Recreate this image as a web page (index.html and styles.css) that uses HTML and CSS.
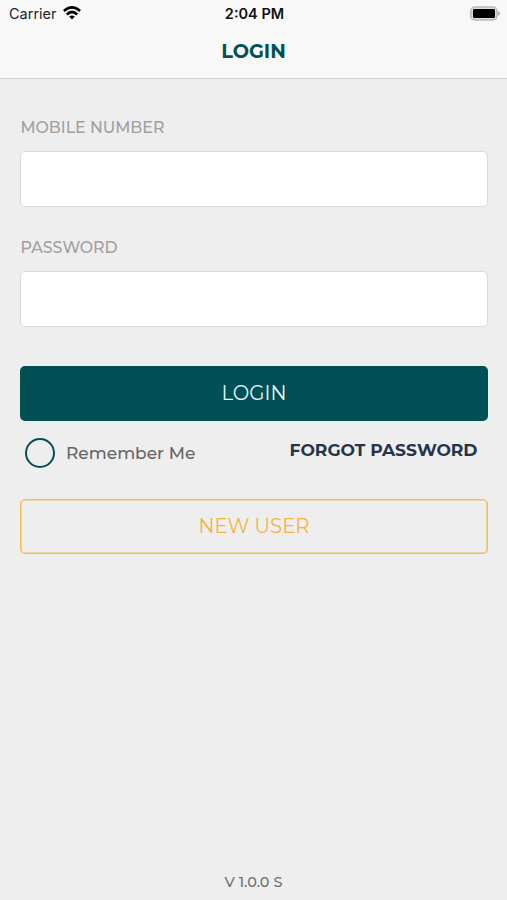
FILE: index.html
```html
<!DOCTYPE html>
<html lang="en">
<head>
<meta charset="utf-8">
<title>Login</title>
<link rel="stylesheet" href="styles.css">
</head>
<body>
<header class="top">
  <div class="status">
    <div class="carrier"><span>Carrier</span>
      <svg class="wifi" width="18" height="14" viewBox="0 0 18 14"><g fill="none" stroke="#000" stroke-width="2.7"><path d="M.9 5.1Q9-2.2 17.1 5.1"/><path d="M3.8 8.4Q9 3.6 14.2 8.4"/></g><path d="M6.2 10.7Q9 8.3 11.8 10.7L9 13.5Z"/></svg>
    </div>
    <span class="time">2:04 PM</span>
    <svg class="battery" width="32" height="15" viewBox="0 0 32 15"><rect x="2.8" y="1" width="26.2" height="13" rx="4" fill="#ddd" stroke="#b9b9b9" stroke-width="1.5"/><rect x="5" y="3" width="22" height="9" rx="1.2"/><path d="M30 5.2Q32 6.2 32 7.5T30 9.8Z" fill="#aaa"/></svg>
  </div>
  <h1 class="title">LOGIN</h1>
</header>
<main class="form">
  <label class="label" for="mobile">MOBILE NUMBER</label>
  <input class="field" id="mobile" type="tel">
  <label class="label second" for="password">PASSWORD</label>
  <input class="field" id="password" type="password">
  <button class="btn primary" type="button">LOGIN</button>
  <div class="options">
    <div class="remember"><span class="radio"></span><span>Remember Me</span></div>
    <a class="forgot">FORGOT PASSWORD</a>
  </div>
  <button class="btn outline" type="button">NEW USER</button>
</main>
<footer class="version">V 1.0.0 S</footer>
</body>
</html>
```
FILE: styles.css
```css
* { box-sizing: border-box; }
body {
  margin: 0;
  height: 900px;
  display: flex;
  flex-direction: column;
  background: #eee;
  font-family: Montserrat, Inter, sans-serif;
}
.top { height: 79px; background: #f8f8f8; border-bottom: 1px solid #d5d5d5; }
.status {
  height: 28px;
  padding: 0 7px 0 9px;
  display: grid;
  grid-template-columns: 1fr auto 1fr;
  align-items: center;
  font: 400 14.5px/28px Inter, sans-serif;
  color: #222;
}
.carrier { display: flex; align-items: center; gap: 6px; }
.wifi { margin-top: -2px; }
.time { font-weight: 600; font-size: 14.5px; color: #111; }
.battery { justify-self: end; margin-top: -2px; }
.title {
  margin: 0;
  text-align: center;
  font-size: 19.3px;
  font-weight: 700;
  line-height: 47px;
  color: #005055;
}
.form { flex: 1; padding: 36px 19px 0 20px; }
.label { display: block; height: 24px; margin-bottom: 12px; padding-left: 0.5px; line-height: 25px; font-size: 15.8px; font-weight: 500; color: #a0a0a0; }
.label.second { margin-top: 28px; }
.field {
  display: block;
  width: 100%;
  height: 56px;
  border: 1px solid #d9d9d9;
  border-radius: 5px;
  background: #fff;
  outline: none;
}
.btn {
  display: block;
  width: 100%;
  height: 55px;
  padding: 0 0 1px;
  border-radius: 5px;
  font: 400 19.7px Montserrat, Inter, sans-serif;
}
.primary { margin-top: 39px; border: 0; background: #005055; color: #e7f5f5; }
.outline { border: 1px solid #f5bd4f; box-shadow: inset 0 0 0 0.6px #f5bd4f; background: transparent; color: #f3b540; }
.options { height: 78px; padding: 17px 10.5px 0 5px; display: flex; justify-content: space-between; align-items: flex-start; }
.remember { display: flex; align-items: center; gap: 11px; height: 30px; font-size: 17px; font-weight: 500; color: #666; }
.radio { width: 30px; height: 30px; border: 2px solid #005055; border-radius: 50%; }
.forgot { line-height: 24px; font-size: 17.1px; font-weight: 700; color: #27354b; }
.version { height: 37px; text-align: center; font-size: 14.5px; font-weight: 500; line-height: 38px; color: #707070; }
```
